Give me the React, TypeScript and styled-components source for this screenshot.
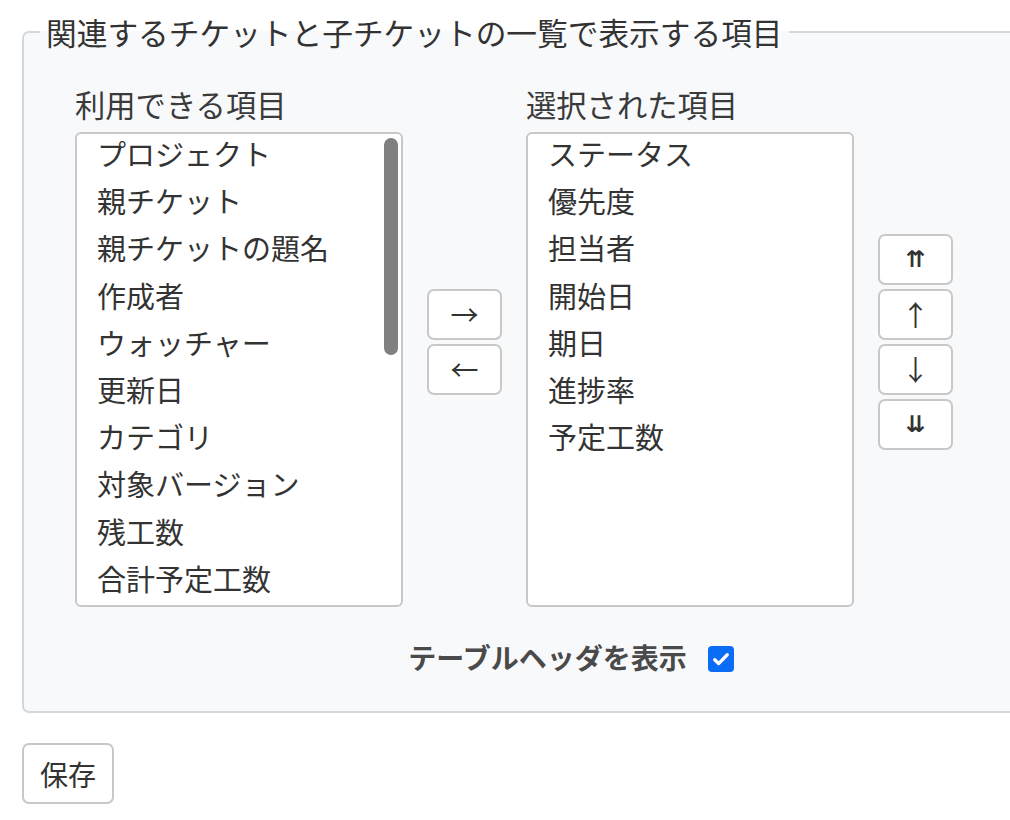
import styled, { createGlobalStyle } from 'styled-components';

const GlobalStyle = createGlobalStyle`
  html, body {
    margin: 0;
    padding: 0;
    background: #ffffff;
    overflow: hidden;
  }
  body {
    font-family: "Noto Sans CJK JP", "Noto Sans", sans-serif;
    color: #333333;
  }
`;

const Page = styled.div`
  padding: 15px 0 0 22px;
`;

const Fieldset = styled.fieldset`
  margin: 0;
  width: 1098px;
  box-sizing: border-box;
  padding: 0;
  border: 2px solid #d4d8de;
  border-radius: 7px;
  background: #f8f9fa;
`;

const Legend = styled.legend`
  margin-left: 16px;
  padding: 0 6px;
  font-size: 30.7px;
  line-height: 34px;
  color: #333333;
`;

const Body = styled.div`
  padding: 27px 51px 28px;
`;

const Row = styled.div`
  display: flex;
  align-items: center;
  gap: 24px;
`;

const Column = styled.div`
  display: flex;
  flex-direction: column;
`;

const ColumnLabel = styled.div`
  height: 56px;
  line-height: 56px;
  font-size: 30.3px;
  color: #3a3a3a;
`;

const ListBox = styled.div`
  position: relative;
  width: 328px;
  height: 475px;
  box-sizing: border-box;
  border: 2px solid #c8c8c8;
  border-radius: 6px;
  background: #ffffff;
  padding: 0 20px;
  overflow: hidden;
`;

const Items = styled.div`
  margin-top: -4px;
`;

const Item = styled.div`
  height: 47.2px;
  line-height: 47.2px;
  font-size: 29px;
  white-space: nowrap;
  color: #333333;
`;

const Thumb = styled.div`
  position: absolute;
  top: 4px;
  right: 3px;
  width: 14px;
  height: 217px;
  border-radius: 7px;
  background: #808080;
`;

const ButtonStack = styled.div`
  display: flex;
  flex-direction: column;
  gap: 4px;
`;

const MoveButton = styled.button<{ $double?: boolean }>`
  width: 75px;
  height: 51px;
  box-sizing: border-box;
  padding: 0;
  border: 2px solid #c8c8c8;
  border-radius: 7px;
  background: #ffffff;
  color: #333333;
  font-family: ${(p) => (p.$double ? '"DejaVu Sans", sans-serif' : '"Noto Sans CJK JP", sans-serif')};
  font-size: ${(p) => (p.$double ? '23px' : '28px')};
  font-weight: ${(p) => (p.$double ? 700 : 400)};
  line-height: 1;
  display: flex;
  align-items: center;
  justify-content: center;
`;

const OptionRow = styled.div`
  margin-top: 24px;
  height: 52px;
  display: flex;
  align-items: center;
  justify-content: center;
  gap: 21px;
`;

const OptionLabel = styled.span`
  font-size: 28px;
  font-weight: 700;
  color: #4a4a4a;
`;

const CheckBox = styled.span`
  width: 26px;
  height: 26px;
  border-radius: 4px;
  background: #0b6cf5;
  display: inline-flex;
  align-items: center;
  justify-content: center;
  margin-top: 4px;
`;

const SaveButton = styled.button`
  margin-top: 30px;
  height: 61px;
  padding: 0 16px;
  border: 2px solid #c8c8c8;
  border-radius: 7px;
  background: #ffffff;
  color: #333333;
  font-family: "Noto Sans CJK JP", sans-serif;
  font-size: 28px;
`;

const available = [
  'プロジェクト',
  '親チケット',
  '親チケットの題名',
  '作成者',
  'ウォッチャー',
  '更新日',
  'カテゴリ',
  '対象バージョン',
  '残工数',
  '合計予定工数',
];

const selected = ['ステータス', '優先度', '担当者', '開始日', '期日', '進捗率', '予定工数'];

export default function App() {
  return (
    <>
      <GlobalStyle />
      <Page>
        <Fieldset>
          <Legend>関連するチケットと子チケットの一覧で表示する項目</Legend>
          <Body>
            <Row>
              <Column>
                <ColumnLabel>利用できる項目</ColumnLabel>
                <ListBox>
                  <Items>
                    {available.map((name) => <Item key={name}>{name}</Item>)}
                  </Items>
                  <Thumb />
                </ListBox>
              </Column>
              <ButtonStack>
                <MoveButton type="button">→</MoveButton>
                <MoveButton type="button">←</MoveButton>
              </ButtonStack>
              <Column>
                <ColumnLabel>選択された項目</ColumnLabel>
                <ListBox>
                  <Items>
                    {selected.map((name) => <Item key={name}>{name}</Item>)}
                  </Items>
                </ListBox>
              </Column>
              <ButtonStack>
                <MoveButton type="button" $double>⇈</MoveButton>
                <MoveButton type="button">↑</MoveButton>
                <MoveButton type="button">↓</MoveButton>
                <MoveButton type="button" $double>⇊</MoveButton>
              </ButtonStack>
            </Row>
            <OptionRow>
              <OptionLabel>テーブルヘッダを表示</OptionLabel>
              <CheckBox>
                <svg width="20" height="20" viewBox="0 0 16 16">
                  <path d="M3 8.6l3.1 3.1L13 4.6" fill="none" stroke="#ffffff" strokeWidth="2.6" strokeLinecap="round" strokeLinejoin="round" />
                </svg>
              </CheckBox>
            </OptionRow>
          </Body>
        </Fieldset>
        <SaveButton type="button">保存</SaveButton>
      </Page>
    </>
  );
}
